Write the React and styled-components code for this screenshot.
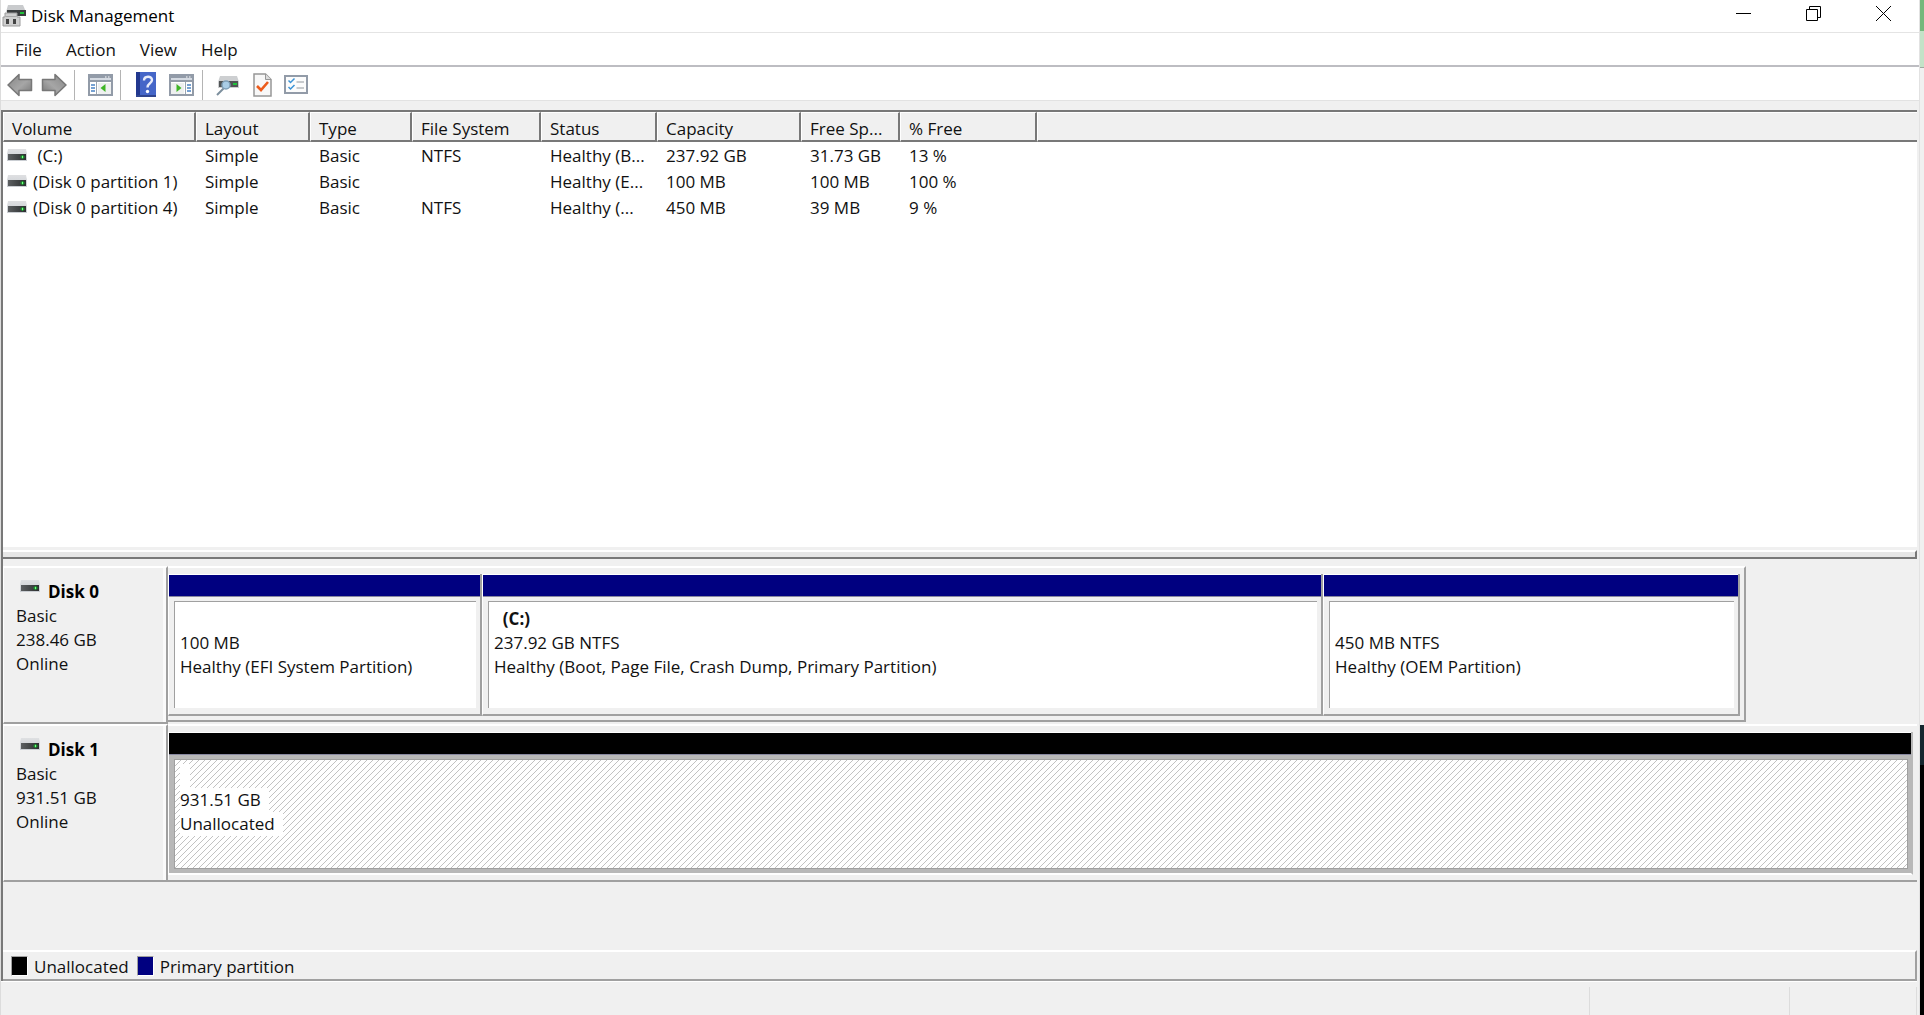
import React from "react";
import styled, { createGlobalStyle, css } from "styled-components";

const face = "#f0f0f0";
const shadow = "#a0a0a0";
const dark = "#787878";
const light = "#ffffff";

const GlobalStyle = createGlobalStyle`
  *, *::before, *::after { box-sizing: border-box; }
  html, body { margin: 0; background: #000; }
  body {
    font-family: "Open Sans", "Noto Sans", sans-serif;
    font-size: 17px;
    line-height: 24px;
    color: #111;
  }
  button { font: inherit; color: inherit; background: none; border: 0; padding: 0; }
`;

const Screen = styled.div`
  display: flex;
  min-height: 100vh;
`;

const Window = styled.main`
  flex: 1;
  min-width: 0;
  display: flex;
  flex-direction: column;
  background: ${face};
  border-left: 1px solid #dcdcdc;
  border-right: 1px solid #e2e2e2;
`;

const Desktop = styled.aside`
  width: 4px;
  display: flex;
  flex-direction: column;
`;

const DesktopBand = styled.div`
  background: ${(p) => p.$color};
  ${(p) => (p.$height ? css`height: ${p.$height}px;` : css`flex: 1;`)}
`;

const TitleBar = styled.header`
  display: flex;
  align-items: center;
  height: 33px;
  padding: 0 1px 0 1px;
  background: #fff;
  border-bottom: 1px solid #e4e4e4;
`;

const Title = styled.h1`
  flex: 1;
  margin: 0 0 0 5px;
  font-size: 17px;
  font-weight: 400;
  color: #000;
`;

const CaptionButton = styled.button`
  width: 70px;
  height: 32px;
  display: grid;
  place-items: center;
  padding-bottom: 5px;
`;

const MenuBar = styled.nav`
  display: flex;
  gap: 2px;
  height: 34px;
  padding: 2px 3px 0;
  align-items: center;
  background: #fff;
  border-bottom: 2px solid #bdbdc2;
`;

const MenuButton = styled.button`
  padding: 0 11px;
`;

const ToolBar = styled.div`
  display: flex;
  align-items: center;
  height: 34px;
  padding: 2px 0 0 2px;
  background: #fff;
  border-bottom: 1px solid #e2e2e2;
`;

const ToolButton = styled.button`
  width: ${(p) => p.$width || 34}px;
  height: 30px;
  display: grid;
  place-items: center;
`;

const ToolSeparator = styled.span`
  width: 1px;
  height: 30px;
  margin: 0 8px 0 3px;
  background: #b4b4b4;
`;

const Workspace = styled.div`
  flex: 1;
  display: flex;
  flex-direction: column;
  margin: 9px 2px 0 0;
  border-top: 2px solid ${dark};
  border-left: 2px solid ${dark};
`;

const VolumePane = styled.section`
  height: 438px;
  background: #fff;
  border-bottom: 3px solid ${face};
`;

const VolumeTable = styled.table`
  width: 100%;
  table-layout: fixed;
  border-collapse: separate;
  border-spacing: 0;
`;

const Col = styled.col`
  ${(p) => p.$width && css`width: ${p.$width}px;`}
`;

const HeadCell = styled.th`
  height: 30px;
  padding: 5px 0 0 8px;
  line-height: 22px;
  text-align: left;
  font-weight: 400;
  white-space: nowrap;
  background: ${face};
  border-top: 1px solid ${light};
  border-left: 1px solid ${light};
  border-bottom: 2px solid ${dark};
  border-right: ${(p) => (p.$last ? "0" : `2px solid ${dark}`)};
`;

const Cell = styled.td`
  height: 26px;
  padding: 1px 0 0 9px;
  white-space: nowrap;
`;

const VolumeName = styled.span`
  display: flex;
  align-items: center;
  gap: 6px;
  margin-left: -5px;
  white-space: pre;
`;

const Splitter = styled.div`
  height: 9px;
  background: #e6e6e6;
  border-top: 2px solid ${light};
  border-bottom: 2px solid ${dark};
  border-right: 2px solid ${dark};
`;

const DiskPane = styled.section`
  flex: 1;
  padding-top: 7px;
`;

const DiskRow = styled.article`
  display: grid;
  grid-template-columns: 165px 1fr;
  height: 158px;
`;

const DiskLabel = styled.div`
  padding: 12px 0 0 12px;
  border-top: 2px solid ${light};
  border-left: 1px solid ${light};
  border-bottom: 2px solid ${shadow};
  border-right: 2px solid ${shadow};
  box-shadow: inset -3px 0 0 #fafafa;
`;

const DiskName = styled.h2`
  display: flex;
  gap: 8px;
  margin: 0;
  padding-left: 4px;
  font-size: 17px;
  line-height: 24px;
  font-weight: 700;
  color: #000;
`;

const Line = styled.div`
  white-space: pre;
`;

const TrackArea = styled.div`
  display: grid;
  grid-template-columns: ${(p) => p.$columns};
  ${(p) =>
    p.$full &&
    css`
      border-top: 2px solid ${light};
      border-bottom: 2px solid ${shadow};
    `}
`;

const Track = styled.div`
  display: grid;
  grid-template-columns: ${(p) => p.$columns};
  padding: ${(p) => (p.$full ? "6px 4px 5px 0" : "6px 4px 4px 0")};
  ${(p) =>
    !p.$full &&
    css`
      border-top: 2px solid ${light};
      border-right: 2px solid ${shadow};
      border-bottom: 2px solid ${shadow};
      margin-bottom: 2px;
    `}
`;

const Partition = styled.div`
  display: flex;
  flex-direction: column;
  min-width: 0;
  border-left: 1px solid ${light};
  border-right: 2px solid ${(p) => (p.$unallocated ? "#b8b8b8" : shadow)};
  border-bottom: 2px solid ${(p) => (p.$unallocated ? light : shadow)};
`;

const PartitionBar = styled.div`
  height: 23px;
  background: ${(p) => (p.$unallocated ? "#000" : "#000080")};
  border-top: 1px solid ${light};
  border-bottom: 1px solid #8888a0;
`;

const PartitionFrame = styled.div`
  flex: 1;
  display: flex;
  padding: ${(p) => (p.$unallocated ? "4px 3px 4px 5px" : "4px 4px 6px 5px")};
  background: ${(p) => (p.$unallocated ? "#b8b8b8" : face)};
`;

const PartitionBody = styled.div`
  flex: 1;
  min-width: 0;
  padding: 5px 0 0 5px;
  background: #fff;
  ${(p) =>
    p.$unallocated
      ? css`
          padding-top: 4px;
          border: 1px solid ${shadow};
          background-image: linear-gradient(135deg, transparent 43%, #c2c2c2 43% 57%, transparent 57%);
          background-size: 6px 6px;
        `
      : css`
          border-top: 1px solid ${shadow};
          border-left: 1px solid ${shadow};
        `}
`;

const PartitionText = styled.div`
  width: fit-content;
  height: 24px;
  white-space: pre;
  font-weight: ${(p) => (p.$bold ? 700 : 400)};
  ${(p) =>
    p.$unallocated &&
    css`
      min-width: 10px;
      padding-right: 8px;
      background: #fff;
    `}
`;

const Legend = styled.footer`
  display: flex;
  align-items: center;
  height: 31px;
  padding: 2px 0 0 8px;
  border-top: 2px solid ${light};
  border-right: 2px solid ${shadow};
  border-bottom: 2px solid ${shadow};
`;

const LegendItem = styled.div`
  display: flex;
  align-items: center;
  gap: 6px;
  margin-right: 8px;
`;

const Swatch = styled.span`
  width: 17px;
  height: 20px;
  margin-bottom: 2px;
  background: ${(p) => p.$color};
  border: 1px solid ${shadow};
  border-right-color: ${light};
  border-bottom-color: ${light};
`;

const StatusBar = styled.footer`
  display: grid;
  grid-template-columns: 1fr 200px 127px;
  height: 34px;
  margin-right: 2px;
  padding-top: 5px;
  border-top: 1px solid ${light};
`;

const StatusCell = styled.div`
  border-right: 1px solid #dcdcdc;
`;

const DriveIcon = ({ id }) => (
  <svg width="20" height="13" viewBox="0 0 20 13" aria-hidden="true">
    <defs>
      <linearGradient id={id} x1="0" y1="0" x2="0" y2="1">
        <stop offset="0" stopColor="#dfe0e2" />
        <stop offset="1" stopColor="#c9cdd2" />
      </linearGradient>
      <linearGradient id={`${id}Front`} x1="0" y1="0" x2="1" y2="0">
        <stop offset="0" stopColor="#5c5f61" />
        <stop offset="1" stopColor="#2c2f30" />
      </linearGradient>
    </defs>
    <path d="M1 0h18l1 5v7H0V5z" fill={`url(#${id})`} />
    <rect x="1" y="5" width="18" height="6" fill={`url(#${id}Front)`} />
    <path d="M15.500 6v4M13.500 8h4" stroke="#17a82c" strokeWidth="1.500" />
    <rect x="15" y="7" width="1" height="2" fill="#7cf58a" />
  </svg>
);

const AppIcon = () => (
  <svg width="24" height="24" viewBox="0 0 24 24" aria-hidden="true">
    <path d="M6 1h15l3 7H4z" fill="#c9cbcd" />
    <rect x="5" y="6" width="19" height="6" fill="#3a3d3e" />
    <path d="M18 9h4" stroke="#1fc23a" strokeWidth="2" />
    <path d="M3 9h12v4h3v9H1v-9h2z" fill="#cfcfcf" stroke="#9b9b9b" />
    <path d="M3.500 12.500h11" stroke="#a8a8a8" />
    <rect x="4" y="15" width="3" height="5" fill="#444" />
    <rect x="11" y="15" width="3" height="5" fill="#444" />
  </svg>
);

const ArrowIcon = ({ id, flip }) => (
  <svg width="26" height="24" viewBox="0 0 26 24" aria-hidden="true">
    <defs>
      <linearGradient id={id} x1="0" y1="0" x2="1" y2="1">
        <stop offset="0" stopColor="#858585" />
        <stop offset="0.550" stopColor="#a6a6a6" />
        <stop offset="1" stopColor="#757575" />
      </linearGradient>
    </defs>
    <path
      transform={flip ? "translate(26 0) scale(-1 1)" : undefined}
      d="M1 12 12 1.500v5h12.500v11H12v5z"
      fill={`url(#${id})`}
      stroke="#777"
      strokeWidth="1.500"
      strokeLinejoin="round"
    />
  </svg>
);

const PaneIcon = ({ right }) => (
  <svg width="25" height="22" viewBox="0 0 25 22" aria-hidden="true">
    <rect x="1" y="1" width="23" height="20" fill="#fff" stroke="#929ba8" strokeWidth="2" />
    <path d="M1 3h23M1 7h23" stroke="#929ba8" strokeWidth="2" />
    <path d="M2 5h21" stroke="#d4dae2" strokeWidth="2" />
    <path d="M17 3h1.500M20 3h1.500" stroke="#fff" />
    <g transform={right ? "translate(25 0) scale(-1 1)" : undefined}>
      <path d="M8.500 8v12" stroke="#9aa4b0" />
      <path d="M3 11h4M3 14h4M3 17h4" stroke="#4a83c4" strokeWidth="1.500" />
      <rect x="10" y="9" width="13" height="11" fill="#eef0f0" />
      <path d="M17.500 10v8L12.500 14z" fill="#3fb527" />
    </g>
  </svg>
);

const HelpIcon = () => (
  <svg width="20" height="25" viewBox="0 0 20 25" aria-hidden="true">
    <rect width="20" height="25" fill="#4566c8" />
    <rect width="4" height="25" fill="#22388f" />
    <rect y="23" width="20" height="2" fill="#30458f" />
    <path d="M8 8.500c0-5 8-5 8-.500 0 3.500-4.500 3-4.500 7.500" fill="none" stroke="#e8ecfa" strokeWidth="2.400" />
    <circle cx="11.500" cy="19.500" r="1.700" fill="#fff" />
  </svg>
);

const ScanIcon = () => (
  <svg width="24" height="22" viewBox="0 0 24 22" aria-hidden="true">
    <path d="M4 2h17l2 6v6H2V8z" fill="#cdcfd1" />
    <rect x="3" y="7" width="19" height="6" fill="#505455" />
    <path d="M17 10h4" stroke="#1fc23a" strokeWidth="2" />
    <path d="m8 14-7 7" stroke="#7d8f9e" strokeWidth="2" />
    <circle cx="10" cy="11" r="4" fill="#a9cde6" stroke="#7fa0b8" strokeWidth="1.500" />
  </svg>
);

const CheckPageIcon = () => (
  <svg width="19" height="24" viewBox="0 0 19 24" aria-hidden="true">
    <path d="M1 1h11.500L18 6.500V23H1z" fill="#f8f8f8" stroke="#979797" strokeWidth="1.500" />
    <path d="M12.500 1v5.500H18" fill="#ddd" stroke="#979797" />
    <path d="m4 13 4 4 7-8" fill="none" stroke="#ec5b1c" strokeWidth="2.600" />
  </svg>
);

const ListIcon = () => (
  <svg width="24" height="19" viewBox="0 0 24 19" aria-hidden="true">
    <rect x="1" y="1" width="22" height="17" fill="#fcfcfc" stroke="#929ba8" strokeWidth="2" />
    <path d="m4.500 5.500 2 2 4-4M4.500 12l2 2 4-4" fill="none" stroke="#3b93d6" strokeWidth="1.500" />
    <path d="M12.500 7h7.500M12.500 13h7.500" stroke="#b5b9bd" strokeWidth="1.500" />
  </svg>
);

const columns = [
  ["Volume", 193],
  ["Layout", 114],
  ["Type", 102],
  ["File System", 129],
  ["Status", 116],
  ["Capacity", 144],
  ["Free Sp...", 99],
  ["% Free", 137],
];

const volumes = [
  [" (C:)", "Simple", "Basic", "NTFS", "Healthy (B...", "237.92 GB", "31.73 GB", "13 %"],
  ["(Disk 0 partition 1)", "Simple", "Basic", "", "Healthy (E...", "100 MB", "100 MB", "100 %"],
  ["(Disk 0 partition 4)", "Simple", "Basic", "NTFS", "Healthy (...", "450 MB", "39 MB", "9 %"],
];

const disks = [
  {
    name: "Disk 0",
    size: "238.46 GB",
    area: "1579fr 171fr",
    partitions: [
      { share: 314, lines: ["100 MB", "Healthy (EFI System Partition)"] },
      {
        share: 841,
        title: "  (C:)",
        lines: ["237.92 GB NTFS", "Healthy (Boot, Page File, Crash Dump, Primary Partition)"],
      },
      { share: 417, lines: ["450 MB NTFS", "Healthy (OEM Partition)"] },
    ],
  },
  {
    name: "Disk 1",
    size: "931.51 GB",
    area: "1fr",
    full: true,
    partitions: [{ share: 1, unallocated: true, lines: ["931.51 GB", "Unallocated"] }],
  },
];

function Disk({ disk }) {
  const columnsTemplate = disk.partitions.map((p) => `${p.share}fr`).join(" ");
  return (
    <DiskRow>
      <DiskLabel>
        <DiskName>
          <DriveIcon id={disk.name.replace(" ", "")} />
          {disk.name}
        </DiskName>
        <Line>Basic</Line>
        <Line>{disk.size}</Line>
        <Line>Online</Line>
      </DiskLabel>
      <TrackArea $columns={disk.area} $full={disk.full}>
        <Track $columns={columnsTemplate} $full={disk.full}>
          {disk.partitions.map((p) => (
            <Partition key={p.lines[1]} $unallocated={p.unallocated}>
              <PartitionBar $unallocated={p.unallocated} />
              <PartitionFrame $unallocated={p.unallocated}>
                <PartitionBody $unallocated={p.unallocated}>
                  <PartitionText $bold $unallocated={p.unallocated}>{p.title}</PartitionText>
                  {p.lines.map((line) => (
                    <PartitionText key={line} $unallocated={p.unallocated}>{line}</PartitionText>
                  ))}
                </PartitionBody>
              </PartitionFrame>
            </Partition>
          ))}
        </Track>
      </TrackArea>
    </DiskRow>
  );
}

export default function App() {
  return (
    <>
      <GlobalStyle />
      <Screen>
        <Window>
          <TitleBar>
            <AppIcon />
            <Title>Disk Management</Title>
            <CaptionButton aria-label="Minimize">
              <svg width="15" height="15" viewBox="0 0 15 15"><path d="M0 7.500h15" stroke="#000" /></svg>
            </CaptionButton>
            <CaptionButton aria-label="Restore">
              <svg width="15" height="15" viewBox="0 0 15 15" fill="none" stroke="#000">
                <path d="M.500 3.500h11v11H.500zM3.500 3.500v-3h11v11h-3" />
              </svg>
            </CaptionButton>
            <CaptionButton aria-label="Close">
              <svg width="15" height="15" viewBox="0 0 15 15"><path d="m0 0 15 15M15 0 0 15" stroke="#000" /></svg>
            </CaptionButton>
          </TitleBar>

          <MenuBar>
            {["File", "Action", "View", "Help"].map((m) => (
              <MenuButton key={m}>{m}</MenuButton>
            ))}
          </MenuBar>

          <ToolBar>
            <ToolButton aria-label="Back"><ArrowIcon id="back" /></ToolButton>
            <ToolButton aria-label="Forward"><ArrowIcon id="forward" flip /></ToolButton>
            <ToolSeparator />
            <ToolButton aria-label="Show console tree"><PaneIcon /></ToolButton>
            <ToolSeparator />
            <ToolButton aria-label="Help"><HelpIcon /></ToolButton>
            <ToolButton aria-label="Show action pane" $width={36}><PaneIcon right /></ToolButton>
            <ToolSeparator />
            <ToolButton aria-label="Rescan disks"><ScanIcon /></ToolButton>
            <ToolButton aria-label="Properties"><CheckPageIcon /></ToolButton>
            <ToolButton aria-label="Settings"><ListIcon /></ToolButton>
          </ToolBar>

          <Workspace>
            <VolumePane>
              <VolumeTable>
                <colgroup>
                  {columns.map(([name, width]) => <Col key={name} $width={width} />)}
                  <Col />
                </colgroup>
                <thead>
                  <tr>
                    {columns.map(([name]) => <HeadCell key={name} scope="col">{name}</HeadCell>)}
                    <HeadCell $last aria-hidden="true" />
                  </tr>
                </thead>
                <tbody>
                  {volumes.map((row, r) => (
                    <tr key={row[0]}>
                      {row.map((value, c) => (
                        <Cell key={columns[c][0]}>
                          {c === 0 ? (
                            <VolumeName><DriveIcon id={`volume${r}`} />{value}</VolumeName>
                          ) : value}
                        </Cell>
                      ))}
                      <Cell />
                    </tr>
                  ))}
                </tbody>
              </VolumeTable>
            </VolumePane>
            <Splitter />
            <DiskPane>
              {disks.map((disk) => <Disk key={disk.name} disk={disk} />)}
            </DiskPane>
            <Legend>
              <LegendItem><Swatch $color="#000" />Unallocated</LegendItem>
              <LegendItem><Swatch $color="#000080" />Primary partition</LegendItem>
            </Legend>
          </Workspace>

          <StatusBar>
            <StatusCell />
            <StatusCell />
            <StatusCell />
          </StatusBar>
        </Window>
        <Desktop>
          <DesktopBand $color="#74b87c" $height={31} />
          <DesktopBand $color="#c3e2c7" $height={36} />
          <DesktopBand $color="#a0a8a0" $height={1} />
          <DesktopBand $color="#f0f0f0" $height={657} />
          <DesktopBand $color="#14262e" $height={40} />
          <DesktopBand $color="#000" />
        </Desktop>
      </Screen>
    </>
  );
}
